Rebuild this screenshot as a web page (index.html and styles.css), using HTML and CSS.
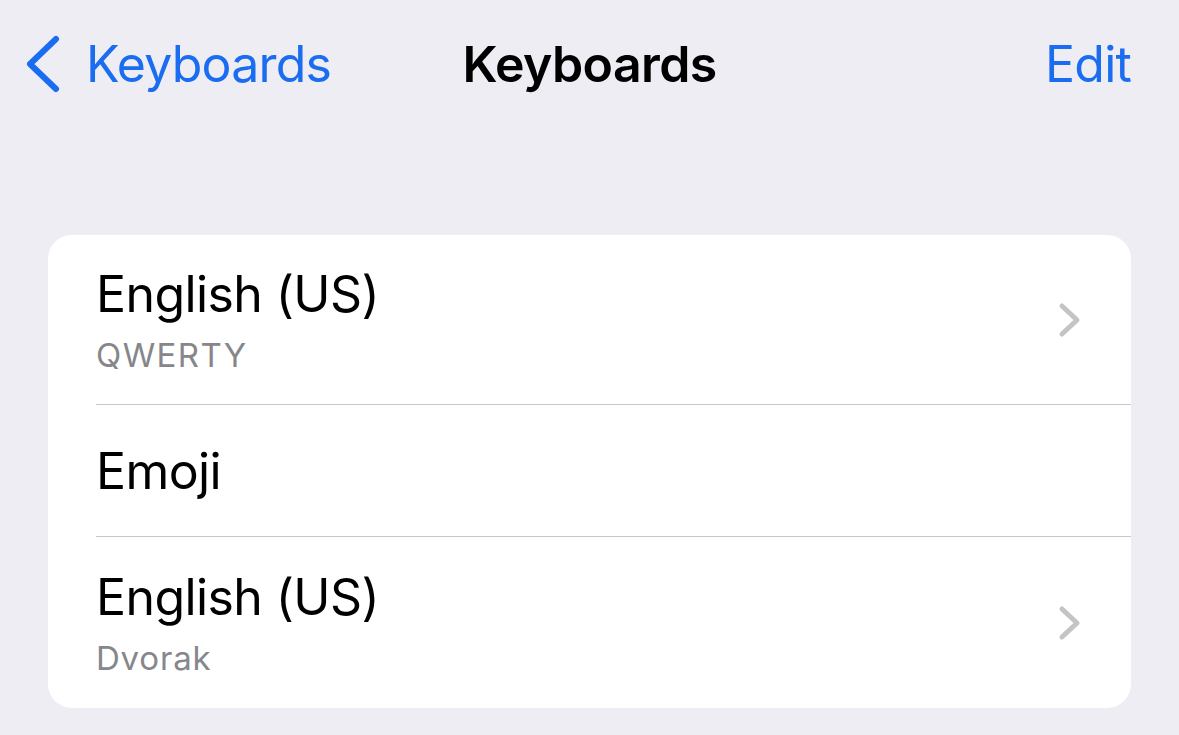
FILE: index.html
```html
<!DOCTYPE html>
<html lang="en">
<head>
<meta charset="utf-8">
<title>Keyboards</title>
<link rel="stylesheet" href="styles.css">
</head>
<body>
  <header class="nav">
    <a class="back" href="#">
      <svg class="back-icon" width="36" height="58" viewBox="0 0 36 58" aria-hidden="true">
        <polyline points="31,4 5,29 31,54" fill="none" stroke="currentColor" stroke-width="6" stroke-linecap="round" stroke-linejoin="round"/>
      </svg>
      <span class="back-label">Keyboards</span>
    </a>
    <h1 class="nav-title">Keyboards</h1>
    <a class="nav-action" href="#">Edit</a>
  </header>

  <main class="card">
    <div class="row">
      <div class="row-inner two-line">
        <div class="row-text">
          <div class="row-title">English (US)</div>
          <div class="row-sub caps">QWERTY</div>
        </div>
        <svg class="chev" width="24" height="36" viewBox="0 0 24 36" aria-hidden="true">
          <polyline points="4,4 19,18 4,32" fill="none" stroke="currentColor" stroke-width="5" stroke-linecap="round" stroke-linejoin="round"/>
        </svg>
      </div>
    </div>
    <div class="row">
      <div class="row-inner one-line">
        <div class="row-text">
          <div class="row-title">Emoji</div>
        </div>
      </div>
    </div>
    <div class="row">
      <div class="row-inner two-line last">
        <div class="row-text">
          <div class="row-title">English (US)</div>
          <div class="row-sub">Dvorak</div>
        </div>
        <svg class="chev" width="24" height="36" viewBox="0 0 24 36" aria-hidden="true">
          <polyline points="4,4 19,18 4,32" fill="none" stroke="currentColor" stroke-width="5" stroke-linecap="round" stroke-linejoin="round"/>
        </svg>
      </div>
    </div>
  </main>
</body>
</html>
```

FILE: styles.css
```css
* { box-sizing: border-box; }

html, body {
  margin: 0;
  padding: 0;
}

body {
  background: #eeedf3;
  font-family: Inter, "Noto Sans", "Liberation Sans", sans-serif;
  color: #000;
  width: 1179px;
  height: 735px;
  overflow: hidden;
}

.nav {
  display: grid;
  grid-template-columns: 1fr auto 1fr;
  align-items: center;
  padding: 34px 48px 0 48px;
  height: 94px;
}

.back {
  display: flex;
  align-items: center;
  gap: 25px;
  margin-left: -23px;
  color: #1a6cf0;
  text-decoration: none;
  justify-self: start;
}

.back-icon {
  display: block;
  flex: none;
}

.back-label,
.nav-action {
  font-size: 50px;
  line-height: 60px;
  font-weight: 400;
  letter-spacing: -0.8px;
}

.nav-title {
  margin: 0;
  font-size: 50px;
  line-height: 60px;
  font-weight: 600;
  letter-spacing: -0.6px;
}

.nav-action {
  justify-self: end;
  color: #1a6cf0;
  text-decoration: none;
}

.card {
  margin: 141px 48px 0;
  background: #fff;
  border-radius: 24px;
  overflow: hidden;
}

.row {
  padding-left: 48px;
}

.row-inner {
  display: flex;
  align-items: center;
  justify-content: space-between;
  padding-right: 48px;
  border-bottom: 1px solid #c7c7cb;
}

.row-inner.last {
  border-bottom: none;
}

.two-line {
  height: 170px;
}

.one-line {
  height: 132px;
}

.row-inner.last {
  height: 171px;
}

.row-text {
  display: flex;
  flex-direction: column;
}

.row-title {
  font-size: 50px;
  line-height: 60px;
  letter-spacing: -0.6px;
}

.row-sub {
  margin-top: 11px;
  font-size: 33px;
  line-height: 40px;
  color: #86868b;
  letter-spacing: 0.8px;
}

.row-sub.caps {
  letter-spacing: 1.4px;
}

.chev {
  display: block;
  flex: none;
  color: #c4c4c7;
  margin-right: 1px;
}
```
